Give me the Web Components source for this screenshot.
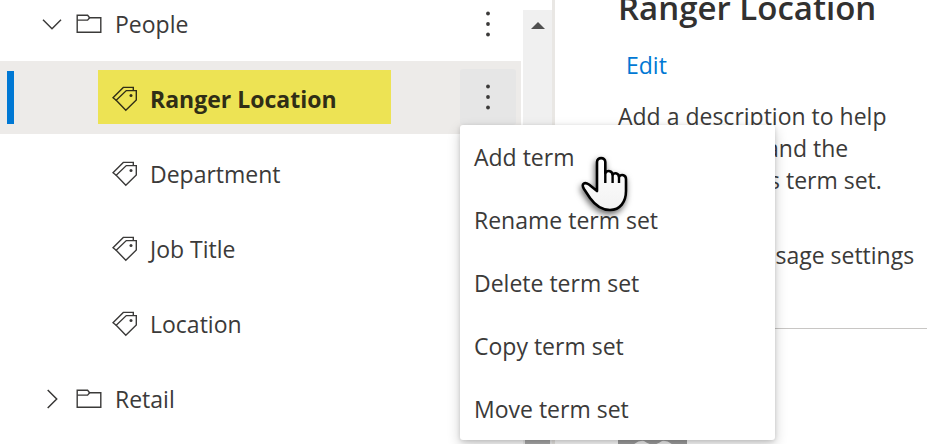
<!DOCTYPE html>
<html lang="en">
<head>
<meta charset="utf-8">
<title>Term store</title>
<style>
html,body{margin:0;height:100%;overflow:hidden;background:#fff}
body{font:23px/32px "Segoe UI","Open Sans","Noto Sans",sans-serif;color:#3b3a39}
</style>
</head>
<body>
<term-store></term-store>
<script>
const define=(name,html)=>{
  customElements.define(name,class extends HTMLElement{
    connectedCallback(){
      if(this.shadowRoot)return;
      const t=document.createElement('template');
      t.innerHTML=html;
      this.attachShadow({mode:'open'}).append(t.content.cloneNode(true));
    }
  });
};

define('tag-icon',`<style>:host{display:block;width:26px;height:26px;flex:none}svg{display:block}</style>
<svg width="26" height="26" viewBox="0 0 26 26" fill="none" stroke="currentColor" stroke-width="1.4">
<path d="M14.3 4.6H24.3V14L13.8 24.3L4.2 14.3Z"/><path d="M4.2 14.3L1 11.7L11.3 1.4H21.3V4.4"/><circle cx="19" cy="9.4" r="1.5" fill="currentColor" stroke="none"/></svg>`);

define('folder-icon',`<style>:host{display:block;width:26px;height:20px;flex:none}svg{display:block}</style>
<svg width="26" height="20" viewBox="0 0 26 20" fill="none" stroke="currentColor" stroke-width="1.4">
<path d="M1.2 18.3V1.2H11.6L13.6 3.7H24.8V18.3Z"/><path d="M1.2 6.1H11.6L13.6 3.7"/></svg>`);

define('chevron-icon',`<style>:host{display:block;width:20px;height:20px;flex:none}svg{display:block}:host([right]) svg{transform:rotate(-90deg)}</style>
<svg width="20" height="20" viewBox="0 0 20 20" fill="none" stroke="currentColor" stroke-width="1.5"><path d="M1 5.7L10 14.7L19 5.7"/></svg>`);

define('more-button',`<style>:host{display:block;flex:none;position:relative}
button{display:grid;place-items:center;width:56px;height:56px;border:0;border-radius:3px;padding:0;background:none;color:inherit}
:host([active]) button{background:#e6e6e6}svg{display:block}
::slotted(*){position:absolute;top:100%;left:0;z-index:2}</style>
<button type="button" aria-label="More options"><svg width="6" height="26" viewBox="0 0 6 26" fill="currentColor"><circle cx="3" cy="2.5" r="1.9"/><circle cx="3" cy="13" r="1.9"/><circle cx="3" cy="23.5" r="1.9"/></svg></button><slot></slot>`);

define('tree-group',`<style>:host{display:flex;align-items:center;box-sizing:border-box;height:73px;padding:2px 5px 0 42px}
button{display:flex;align-items:center;flex:1;padding:0;border:0;background:none;font:inherit;color:inherit;text-align:left}
folder-icon{margin:0 13px 0 14px}</style>
<button type="button"><slot name="chevron"></slot><folder-icon></folder-icon><slot></slot></button><slot name="more"></slot>`);

define('tree-term',`<style>:host{display:flex;align-items:center;box-sizing:border-box;height:73px;padding:0 5px 2px 98px}
button{display:flex;align-items:center;gap:12px;flex:0 1 293px;height:54px;padding:4px 14px 0;border:0;background:none;font:inherit;color:inherit;text-align:left}
:host([selected]){background:linear-gradient(#0078d4,#0078d4) 7px 10px/7px 53px no-repeat #edebe9}
:host([selected]) button{background:#ede354;font-weight:700;color:#302e16}
slot[name=more]{display:flex;flex:1;justify-content:flex-end}</style>
<button type="button"><tag-icon></tag-icon><slot></slot></button><slot name="more"></slot>`);

define('hand-pointer',`<style>:host{display:block;pointer-events:none}svg{display:block;overflow:visible;filter:drop-shadow(-1px 3px 3px #0009)}</style>
<svg width="48" height="56" viewBox="0 0 48 56"><defs><linearGradient id="g" x2="0" y2="1"><stop stop-color="#fff"/><stop offset="1" stop-color="#f2f2f2"/></linearGradient></defs>
<path d="M16 35V6C16 .8 24.3 .8 24.3 6V17C27 13.6 31 15 31.6 18.5C34 16 37.7 17.5 38 20.5C40.5 17.8 45 19 45 23V35C45 46 39 54 29 54C20 54 14 49 9 42L3 33C-.5 27 4 26 8 28.5Z" fill="url(#g)" stroke="#000" stroke-width="2.6" stroke-linejoin="round"/>
<path d="M24.3 16V27M31.6 18V27M38 19.5V27" stroke="#000" stroke-width="2.4" fill="none"/></svg>`);

define('context-menu',`<style>:host{display:block;width:315px;background:#fff;border-radius:3px;box-shadow:0 5px 13px #0003,0 1px 4px #0002}
::slotted(hand-pointer){position:absolute;left:121px;top:31px}</style><div role="menu"><slot></slot></div>`);

define('menu-item',`<style>:host{display:block}button{display:block;width:100%;height:63px;padding:2px 14px 0;border:0;background:none;font:inherit;color:inherit;text-align:left}</style>
<button type="button" role="menuitem"><slot></slot></button>`);

define('scroll-rail',`<style>:host{display:flex;flex-direction:column;align-items:center;justify-content:space-between;width:29px;margin-top:10px;padding-top:12px;box-sizing:border-box;background:#f0f0f0}
svg{display:block}div{width:25px;height:16px;background:#adadad}</style>
<svg width="14" height="7" viewBox="0 0 14 7"><path d="M7 0L14 7H0Z" fill="#505050"/></svg><div></div>`);

define('term-tree',`<style>:host{display:grid;grid-template-columns:1fr 29px;grid-template-rows:minmax(0,1fr);column-gap:2px;border-right:3px solid #e9e7e4;min-height:0}
nav{display:flex;flex-direction:column;gap:2px;margin-top:-14px}</style>
<nav aria-label="Terms">
<tree-group><chevron-icon slot="chevron"></chevron-icon>People<more-button slot="more"></more-button></tree-group>
<tree-term selected>Ranger Location<more-button slot="more" active><context-menu>
<menu-item>Add term</menu-item><menu-item>Rename term set</menu-item><menu-item>Delete term set</menu-item><menu-item>Copy term set</menu-item><menu-item>Move term set</menu-item><hand-pointer></hand-pointer></context-menu></more-button></tree-term>
<tree-term>Department</tree-term><tree-term>Job Title</tree-term><tree-term>Location</tree-term>
<tree-group><chevron-icon slot="chevron" right></chevron-icon>Retail</tree-group>
</nav><scroll-rail></scroll-rail>`);

define('user-avatar',`<style>:host{display:block}svg{display:block}</style>
<svg width="70" height="70" viewBox="0 0 70 70"><rect width="69" height="70" rx="6" fill="#a0a0a0"/><path d="M14 12Q20 6 26 7Q35 14 44 7Q50 6 56 12L60 20V70H10V20Z" fill="#f0f0f0"/></svg>`);

define('term-details',`<style>:host{display:block;padding-left:63px;min-width:0;white-space:nowrap;overflow:hidden}
h1{margin:-14px 0 0;font-size:33px;line-height:44px;font-weight:600;color:#323130}
a{color:inherit;text-decoration:none}
.edit{display:block;width:max-content;margin:19px 0 19px 8px;color:#0078d4}
p{margin:0}nav{display:flex;gap:48px;margin-top:43px;padding-left:8px}
hr{margin:57px 0 105px;border:0;border-top:1px solid #c8c6c4}</style>
<h1>Ranger Location</h1><a class="edit" href="#edit">Edit</a>
<p>Add a description to help<br>users understand the<br>purpose of this term set.</p>
<nav aria-label="Settings"><a href="#general">General</a><a href="#usage">Usage settings</a></nav><hr><user-avatar></user-avatar>`);

define('term-store',`<style>:host{display:grid;grid-template-columns:555px minmax(0,1fr);grid-template-rows:minmax(0,1fr);height:100%}</style>
<term-tree></term-tree><term-details></term-details>`);
</script>
</body>
</html>
